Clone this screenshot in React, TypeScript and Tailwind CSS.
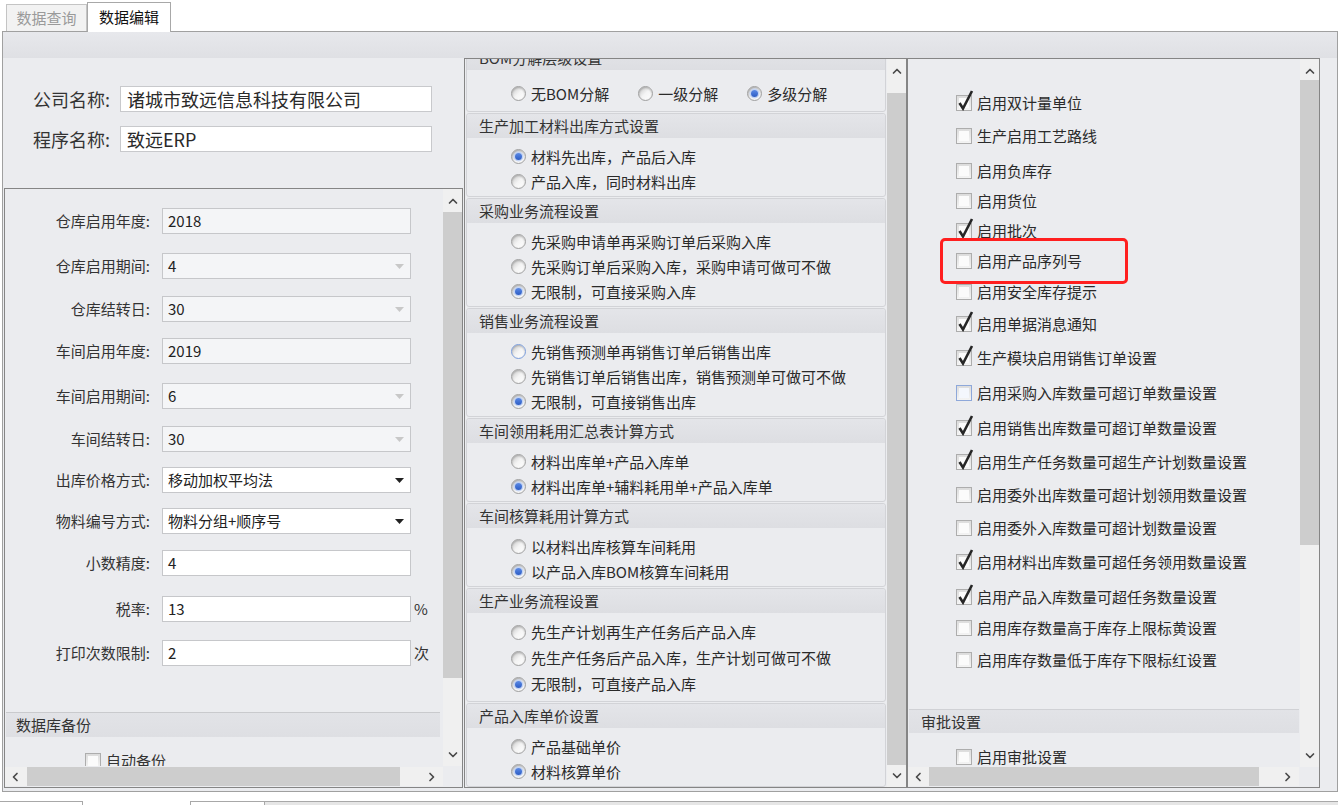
import React from "react";

type Dir = "up" | "down" | "left" | "right";

function Chevron({ dir }: { dir: Dir }) {
  const d = {
    up: "M1.5 6 L5 2.5 L8.5 6",
    down: "M1.5 3 L5 6.5 L8.5 3",
    left: "M6 1.5 L2.5 5 L6 8.5",
    right: "M3 1.5 L6.5 5 L3 8.5",
  }[dir];
  return (
    <svg width="10" height="10" viewBox="0 0 10 10">
      <path d={d} fill="none" stroke="#4a4a4a" strokeWidth="1.7" strokeLinecap="round" strokeLinejoin="round" />
    </svg>
  );
}

function VScroll({ upCls, thumbCls }: { upCls: string; thumbCls: string }) {
  return (
    <div className="w-[19px] h-full flex flex-col bg-[#f0f0f0] shrink-0">
      <div className={`${upCls} flex items-start justify-center pt-[8px] shrink-0`}>
        <Chevron dir="up" />
      </div>
      <div className={`${thumbCls} bg-[#cdcdcd] shrink-0`} />
      <div className="flex-1 flex items-end justify-center pb-[6px]">
        <Chevron dir="down" />
      </div>
    </div>
  );
}

function HScroll({ thumbCls, leftCls }: { thumbCls: string; leftCls: string }) {
  return (
    <div className="flex-1 h-full flex bg-[#f0f0f0]">
      <div className={`${leftCls} flex items-center justify-center shrink-0`}>
        <Chevron dir="left" />
      </div>
      <div className={`${thumbCls} bg-[#cdcdcd] shrink-0`} />
      <div className="flex-1 flex items-center justify-end pr-[6px]">
        <Chevron dir="right" />
      </div>
    </div>
  );
}

function Radio({ checked, focus }: { checked?: boolean; focus?: boolean }) {
  return (
    <span
      className={`inline-flex w-[15px] h-[15px] rounded-full items-center justify-center border shrink-0 bg-linear-to-br from-[#c9c9c9] via-[#f4f4f4] to-[#ffffff] shadow-[inset_0_1px_2px_rgba(0,0,0,0.25)] ${
        focus ? "border-[#7b9ddb]" : "border-[#a0a0a0]"
      }`}
    >
      {checked && <span className="w-[7px] h-[7px] rounded-full bg-linear-to-b from-[#5b8ae6] to-[#2d5cc4] shadow-[0_0_0_1.5px_#c3d3f2]" />}
    </span>
  );
}

function Check({ checked, hover }: { checked?: boolean; hover?: boolean }) {
  return (
    <span className="relative w-[16px] h-[16px] shrink-0 inline-block">
      <span
        className={`absolute inset-0 border bg-linear-to-b from-[#dcdcdc] to-[#f4f4f4] ${
          hover ? "border-[#8ea8da]" : "border-[#adadad]"
        }`}
      >
        <span className={`absolute inset-[2px] ${hover ? "bg-[#f4f7fd]" : "bg-[#fbfbfb]"}`} />
      </span>
      {checked && (
        <svg className="absolute left-[1px] top-[-6px]" width="17" height="22" viewBox="0 0 17 22">
          <path d="M2.5 14 L6 19.5 L15 2" fill="none" stroke="#262626" strokeWidth="2.6" />
        </svg>
      )}
    </span>
  );
}

const LEFT_ROWS: { label: string; value: string; kind: string; mt: string; suffix?: string }[] = [
  { label: "仓库启用年度:", value: "2018", kind: "disabled", mt: "mt-[19px]" },
  { label: "仓库启用期间:", value: "4", kind: "disabledCombo", mt: "mt-[19px]" },
  { label: "仓库结转日:", value: "30", kind: "disabledCombo", mt: "mt-[17px]" },
  { label: "车间启用年度:", value: "2019", kind: "disabled", mt: "mt-[16px]" },
  { label: "车间启用期间:", value: "6", kind: "disabledCombo", mt: "mt-[19px]" },
  { label: "车间结转日:", value: "30", kind: "disabledCombo", mt: "mt-[17px]" },
  { label: "出库价格方式:", value: "移动加权平均法", kind: "combo", mt: "mt-[15px]" },
  { label: "物料编号方式:", value: "物料分组+顺序号", kind: "combo", mt: "mt-[15px]" },
  { label: "小数精度:", value: "4", kind: "text", mt: "mt-[16px]" },
  { label: "税率:", value: "13", kind: "text", mt: "mt-[20px]", suffix: "%" },
  { label: "打印次数限制:", value: "2", kind: "text", mt: "mt-[18px]", suffix: "次" },
];

const RIGHT_ROWS: { text: string; checked?: boolean; hover?: boolean; mt: string }[] = [
  { text: "启用双计量单位", checked: true, mt: "mt-[34px]" },
  { text: "生产启用工艺路线", mt: "mt-[13px]" },
  { text: "启用负库存", mt: "mt-[15px]" },
  { text: "启用货位", mt: "mt-[10px]" },
  { text: "启用批次", checked: true, mt: "mt-[10px]" },
  { text: "启用产品序列号", mt: "mt-[10px]" },
  { text: "启用安全库存提示", mt: "mt-[11px]" },
  { text: "启用单据消息通知", checked: true, mt: "mt-[12px]" },
  { text: "生产模块启用销售订单设置", checked: true, mt: "mt-[14px]" },
  { text: "启用采购入库数量可超订单数量设置", hover: true, mt: "mt-[15px]" },
  { text: "启用销售出库数量可超订单数量设置", checked: true, mt: "mt-[15px]" },
  { text: "启用生产任务数量可超生产计划数量设置", checked: true, mt: "mt-[14px]" },
  { text: "启用委外出库数量可超计划领用数量设置", mt: "mt-[13px]" },
  { text: "启用委外入库数量可超计划数量设置", mt: "mt-[13px]" },
  { text: "启用材料出库数量可超任务领用数量设置", checked: true, mt: "mt-[14px]" },
  { text: "启用产品入库数量可超任务数量设置", checked: true, mt: "mt-[15px]" },
  { text: "启用库存数量高于库存上限标黄设置", mt: "mt-[11px]" },
  { text: "启用库存数量低于库存下限标红设置", mt: "mt-[12px]" },
];

const GROUPS: { title: string; options: { text: string; checked?: boolean; focus?: boolean }[]; tall?: boolean }[] = [
  {
    title: "生产加工材料出库方式设置",
    options: [{ text: "材料先出库，产品后入库", checked: true }, { text: "产品入库，同时材料出库" }],
  },
  {
    title: "采购业务流程设置",
    options: [
      { text: "先采购申请单再采购订单后采购入库" },
      { text: "先采购订单后采购入库，采购申请可做可不做" },
      { text: "无限制，可直接采购入库", checked: true },
    ],
  },
  {
    title: "销售业务流程设置",
    options: [
      { text: "先销售预测单再销售订单后销售出库", focus: true },
      { text: "先销售订单后销售出库，销售预测单可做可不做" },
      { text: "无限制，可直接销售出库", checked: true },
    ],
  },
  {
    title: "车间领用耗用汇总表计算方式",
    options: [{ text: "材料出库单+产品入库单" }, { text: "材料出库单+辅料耗用单+产品入库单", checked: true }],
  },
  {
    title: "车间核算耗用计算方式",
    options: [{ text: "以材料出库核算车间耗用" }, { text: "以产品入库BOM核算车间耗用", checked: true }],
  },
  {
    title: "生产业务流程设置",
    tall: true,
    options: [
      { text: "先生产计划再生产任务后产品入库" },
      { text: "先生产任务后产品入库，生产计划可做可不做" },
      { text: "无限制，可直接产品入库", checked: true },
    ],
  },
  {
    title: "产品入库单价设置",
    options: [{ text: "产品基础单价" }, { text: "材料核算单价", checked: true }],
  },
];

function GroupHeader({ title }: { title: string }) {
  return (
    <div className="h-[24px] flex items-center pl-[12px] bg-linear-to-b from-[#e4e5e9] to-[#dddee2] rounded-t-[3px] text-[#333] text-[15px] leading-[20px]">
      {title}
    </div>
  );
}

function ComboArrow({ dark }: { dark?: boolean }) {
  return (
    <svg width="9" height="5" viewBox="0 0 9 5" className="mr-[6px]">
      <path d="M0 0 L9 0 L4.5 5 Z" fill={dark ? "#222" : "#c8c8c8"} />
    </svg>
  );
}

export default function App() {
  return (
    <div className="w-[1338px] h-[805px] bg-white overflow-hidden relative font-['Noto_Sans_CJK_SC','Noto_Sans',sans-serif] text-[#2a2a2a]">
      {/* tabs */}
      <div className="h-[31px] flex items-end pl-[6px]">
        <div className="w-[81px] h-[27px] border border-b-0 border-[#c4c4c4] bg-[#f2f2f2] flex items-center justify-center text-[15px] text-[#9a9a9a]">
          数据查询
        </div>
        <div className="w-[84px] h-[30px] border border-b-0 border-[#a8a8a8] bg-white flex items-center justify-center text-[15px] text-[#111] relative top-[1px] z-10">
          数据编辑
        </div>
      </div>

      {/* main panel */}
      <div className="ml-[2px] h-[761px] border border-[#a0a0a0] bg-[#ebecef] flex flex-col">
        <div className="h-[26px] bg-linear-to-b from-[#e7e8ec] to-[#dfe0e4] shrink-0" />
        <div className="h-[730px] flex shrink-0">
          {/* left column */}
          <div className="w-[461px] flex flex-col shrink-0">
            <div className="h-[130px] pt-[28px] flex flex-col gap-[14px]">
              <div className="flex items-center h-[26px]">
                <div className="pl-[30px] w-[117px] text-[18px] text-[#333] leading-[24px]">公司名称:</div>
                <div className="w-[312px] h-[26px] bg-white border border-[#c8c9cc] flex items-center pl-[6px] text-[18px] leading-[24px]">
                  诸城市致远信息科技有限公司
                </div>
              </div>
              <div className="flex items-center h-[26px]">
                <div className="pl-[30px] w-[117px] text-[18px] text-[#333] leading-[24px]">程序名称:</div>
                <div className="w-[312px] h-[26px] bg-white border border-[#c8c9cc] flex items-center pl-[6px] text-[18px] leading-[24px]">
                  致远ERP
                </div>
              </div>
            </div>
            <div className="ml-[1px] w-[459px] h-[600px] border border-[#858585] flex flex-col">
              <div className="h-[577px] flex">
                <div className="flex-1 overflow-hidden flex flex-col text-[15px] leading-[20px]">
                  {LEFT_ROWS.map((r) => (
                    <div key={r.label} className={`${r.mt} h-[26px] flex items-center shrink-0`}>
                      <div className="w-[145px] text-right text-[#333]">{r.label}</div>
                      <div
                        className={`ml-[12px] w-[249px] h-[26px] border border-[#c6c7ca] flex items-center justify-between pl-[5px] ${
                          r.kind === "disabled" || r.kind === "disabledCombo" ? "bg-[#f4f5f7]" : "bg-white"
                        }`}
                      >
                        <span className="text-[#222]">{r.value}</span>
                        {r.kind === "disabledCombo" && <ComboArrow />}
                        {r.kind === "combo" && <ComboArrow dark />}
                      </div>
                      {r.suffix && <span className="ml-[3px] text-[#333]">{r.suffix}</span>}
                    </div>
                  ))}
                  <div className="mt-[46px] ml-[1px] mr-[3px] h-[25px] border-t border-[#c9cacd] bg-linear-to-b from-[#e2e3e7] to-[#dedfe3] flex items-center pl-[10px] text-[#333] shrink-0">
                    数据库备份
                  </div>
                  <div className="mt-[15px] h-[18px] pl-[80px] flex items-center gap-[5px] shrink-0">
                    <Check />
                    <span className="text-[#333]">自动备份</span>
                  </div>
                </div>
                <VScroll upCls="h-[23px]" thumbCls="h-[466px]" />
              </div>
              <div className="h-[21px] flex pt-[1px]">
                <div className="w-[438px] h-[19px] flex">
                  <HScroll leftCls="w-[22px]" thumbCls="w-[373px]" />
                </div>
                <div className="flex-1 bg-[#ebecef]" />
              </div>
            </div>
          </div>

          {/* middle column */}
          <div className="w-[443px] h-[730px] border border-[#858585] flex shrink-0">
            <div className="flex-1 overflow-hidden px-[1px] text-[15px] leading-[20px]">
              <div className="flex flex-col gap-[1px] -mt-[14px]">
                <div className="border border-[#d2d3d7] rounded-[3px] bg-[#ebecef] shrink-0">
                  <GroupHeader title="BOM分解层级设置" />
                  <div className="pt-[11px] pb-[5px]">
                    <div className="h-[25px] pl-[44px] flex items-center gap-[29px]">
                      <div className="flex items-center gap-[5px]">
                        <Radio />
                        <span>无BOM分解</span>
                      </div>
                      <div className="flex items-center gap-[5px]">
                        <Radio />
                        <span>一级分解</span>
                      </div>
                      <div className="flex items-center gap-[5px]">
                        <Radio checked />
                        <span>多级分解</span>
                      </div>
                    </div>
                  </div>
                </div>
                {GROUPS.map((g) => (
                  <div key={g.title} className="border border-[#d2d3d7] rounded-[3px] bg-[#ebecef] shrink-0">
                    <GroupHeader title={g.title} />
                    <div className={g.tall ? "pt-[6px] pb-[4px]" : "pt-[6px] pb-[2px]"}>
                      {g.options.map((o) => (
                        <div
                          key={o.text}
                          className={`${g.tall ? "h-[26px]" : "h-[25px]"} pl-[44px] flex items-center gap-[5px]`}
                        >
                          <Radio checked={o.checked} focus={o.focus} />
                          <span>{o.text}</span>
                        </div>
                      ))}
                    </div>
                  </div>
                ))}
              </div>
            </div>
            <VScroll upCls="h-[34px]" thumbCls="h-[672px]" />
          </div>

          {/* right column */}
          <div className="w-[413px] h-[730px] border border-[#858585] flex flex-col shrink-0">
            <div className="h-[708px] flex">
              <div className="flex-1 overflow-hidden relative flex flex-col text-[15px] leading-[20px]">
                {RIGHT_ROWS.map((r) => (
                  <div key={r.text} className={`${r.mt} h-[20px] pl-[48px] flex items-center gap-[5px] shrink-0`}>
                    <Check checked={r.checked} hover={r.hover} />
                    <span className="text-[#2a2a2a]">{r.text}</span>
                  </div>
                ))}
                <div className="mt-[39px] mx-[1px] h-[24px] border-t border-[#d0d1d5] bg-linear-to-b from-[#e2e3e7] to-[#dedfe3] flex items-center pl-[12px] text-[#333] shrink-0">
                  审批设置
                </div>
                <div className="mt-[14px] h-[20px] pl-[48px] flex items-center gap-[5px] shrink-0">
                  <Check />
                  <span>启用审批设置</span>
                </div>
                <div className="absolute left-[32px] top-[179px] w-[188px] h-[46px] border-[3px] border-[#ff1f1f] rounded-[5px]" />
              </div>
              <VScroll upCls="h-[21px]" thumbCls="h-[465px]" />
            </div>
            <div className="h-[20px] flex">
              <div className="w-[391px] h-[19px] flex">
                <HScroll leftCls="w-[21px]" thumbCls="w-[330px]" />
              </div>
              <div className="flex-1 bg-[#ebecef]" />
            </div>
          </div>
          <div className="flex-1" />
        </div>
      </div>

      {/* bottom tab stubs */}
      <div className="mt-[9px] flex h-[4px]">
        <div className="w-[83px] border-t border-r border-[#a8a8a8] bg-white" />
        <div className="w-[107px]" />
        <div className="w-[75px] border-t border-l border-r border-[#a8a8a8] bg-white" />
        <div className="flex-1 border-t border-[#a8a8a8] bg-[#e6e6e6]" />
      </div>
    </div>
  );
}
